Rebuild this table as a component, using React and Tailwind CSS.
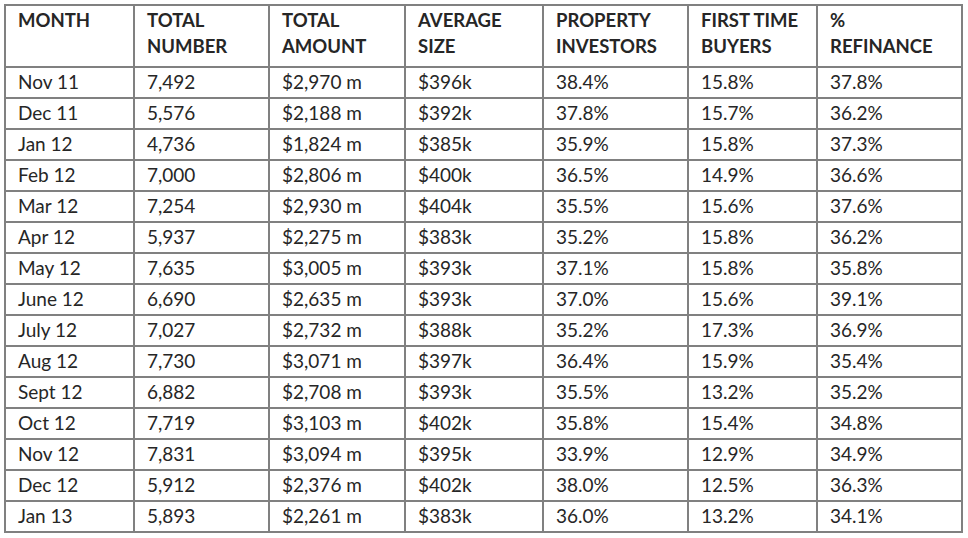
import React from 'react';

const rows = [
  ['Nov 11', '7,492', '$2,970 m', '$396k', '38.4%', '15.8%', '37.8%'],
  ['Dec 11', '5,576', '$2,188 m', '$392k', '37.8%', '15.7%', '36.2%'],
  ['Jan 12', '4,736', '$1,824 m', '$385k', '35.9%', '15.8%', '37.3%'],
  ['Feb 12', '7,000', '$2,806 m', '$400k', '36.5%', '14.9%', '36.6%'],
  ['Mar 12', '7,254', '$2,930 m', '$404k', '35.5%', '15.6%', '37.6%'],
  ['Apr 12', '5,937', '$2,275 m', '$383k', '35.2%', '15.8%', '36.2%'],
  ['May 12', '7,635', '$3,005 m', '$393k', '37.1%', '15.8%', '35.8%'],
  ['June 12', '6,690', '$2,635 m', '$393k', '37.0%', '15.6%', '39.1%'],
  ['July 12', '7,027', '$2,732 m', '$388k', '35.2%', '17.3%', '36.9%'],
  ['Aug 12', '7,730', '$3,071 m', '$397k', '36.4%', '15.9%', '35.4%'],
  ['Sept 12', '6,882', '$2,708 m', '$393k', '35.5%', '13.2%', '35.2%'],
  ['Oct 12', '7,719', '$3,103 m', '$402k', '35.8%', '15.4%', '34.8%'],
  ['Nov 12', '7,831', '$3,094 m', '$395k', '33.9%', '12.9%', '34.9%'],
  ['Dec 12', '5,912', '$2,376 m', '$402k', '38.0%', '12.5%', '36.3%'],
  ['Jan 13', '5,893', '$2,261 m', '$383k', '36.0%', '13.2%', '34.1%'],
];

const headers = [
  ['MONTH'],
  ['TOTAL', 'NUMBER'],
  ['TOTAL', 'AMOUNT'],
  ['AVERAGE', 'SIZE'],
  ['PROPERTY', 'INVESTORS'],
  ['FIRST TIME', 'BUYERS'],
  ['%', 'REFINANCE'],
];

const widths = [129, 135, 136, 138, 145, 129, 145];

export default function App() {
  return (
    <div className="h-[538px] w-[968px] bg-white pl-[4px] pt-[4px] font-['Lato',sans-serif] text-[#262626]">
      <table className="table-fixed border-collapse border-2 border-[#808080]">
        <colgroup>
          {widths.map((w, i) => (
            <col key={i} style={{ width: w }} />
          ))}
        </colgroup>
        <thead>
          <tr className="h-[62px]">
            {headers.map((h, i) => (
              <th
                key={i}
                className="border-2 border-[#808080] pl-[12px] pt-[1px] text-left align-top text-[18.5px] font-bold leading-[26px]"
              >
                {h.map((line, j) => (
                  <div key={j}>{line}</div>
                ))}
              </th>
            ))}
          </tr>
        </thead>
        <tbody>
          {rows.map((r, i) => (
            <tr key={i} className="h-[31px]">
              {r.map((c, j) => (
                <td
                  key={j}
                  className="border-2 border-[#808080] pl-[12px] pb-[2px] align-middle text-[19px] leading-[22px]"
                >
                  {c}
                </td>
              ))}
            </tr>
          ))}
        </tbody>
      </table>
    </div>
  );
}
